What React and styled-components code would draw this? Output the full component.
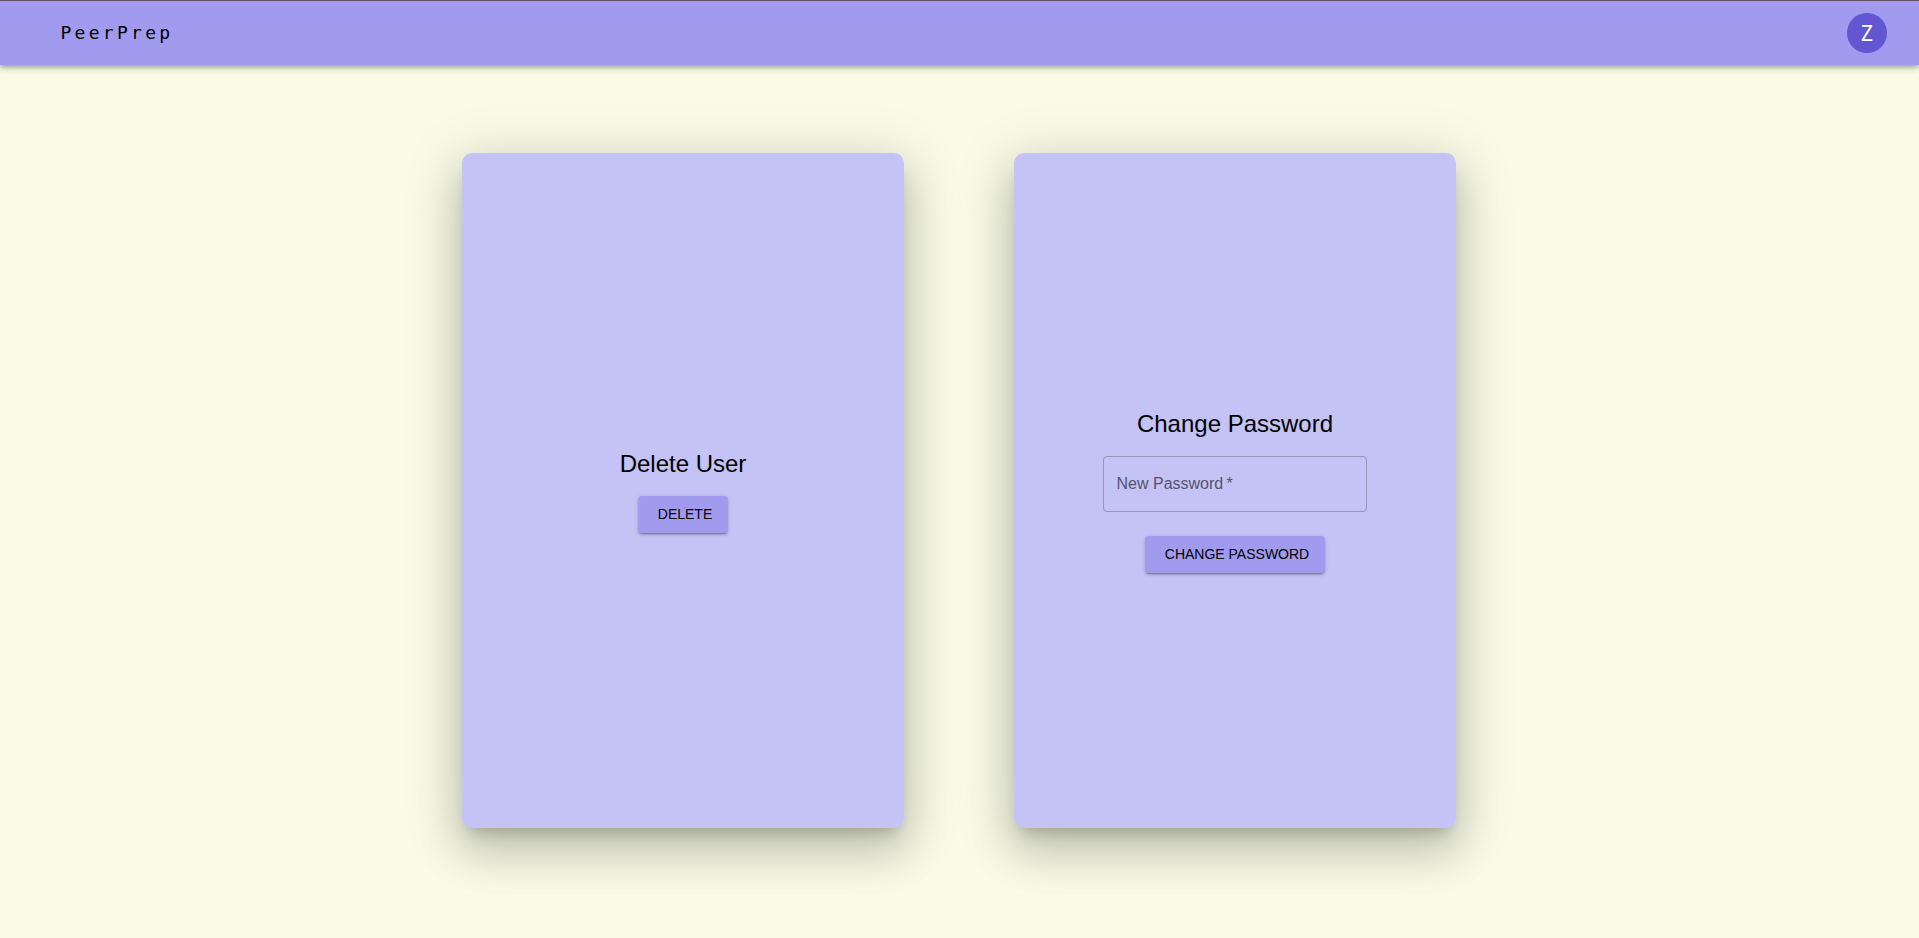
import React from 'react';
import styled, { createGlobalStyle } from 'styled-components';

const GlobalStyle = createGlobalStyle`
  *, *::before, *::after { box-sizing: border-box; }
  html, body { margin: 0; background: #f9fbe7; }
  body { font-family: "Liberation Sans", Arial, sans-serif; color: #000; overflow: hidden; }
`;

const Page = styled.div`
  display: flex;
  flex-direction: column;
  height: 100vh;
`;

const AppBar = styled.header`
  display: flex;
  align-items: center;
  justify-content: space-between;
  height: 65px;
  flex: none;
  padding: 0 32px 0 60.5px;
  border-top: 1px solid #6c4f60;
  background: #a19bf0;
  box-shadow: 0 2px 4px -1px rgba(0, 0, 0, 0.2), 0 4px 5px 0 rgba(0, 0, 0, 0.14),
    0 1px 10px 0 rgba(0, 0, 0, 0.12);
`;

const Brand = styled.a`
  font-family: "DejaVu Sans Mono", monospace;
  font-size: 18px;
  line-height: 28px;
  letter-spacing: 3.28px;
`;

const Avatar = styled.div`
  display: flex;
  align-items: center;
  justify-content: center;
  width: 40px;
  height: 40px;
  border-radius: 50%;
  background: #6256d2;
  color: #fff;
  font-family: "Noto Sans", sans-serif;
  font-size: 21px;
  line-height: 20px;
`;

const Main = styled.main`
  display: flex;
  justify-content: center;
  gap: 110px;
  padding: 88px 1px 0 0;
`;

const Card = styled.section`
  display: flex;
  flex-direction: column;
  align-items: center;
  justify-content: center;
  width: 442px;
  height: 675px;
  border-radius: 10px;
  background: #c5c2f6;
  box-shadow: 0 11px 15px -7px rgba(0, 0, 0, 0.2), 0 24px 44px 3px rgba(0, 0, 0, 0.14),
    0 9px 56px 8px rgba(0, 0, 0, 0.12);
`;

const Title = styled.h1`
  margin: 0 0 16px;
  font-size: 24px;
  font-weight: 400;
  line-height: 32px;
`;

const Field = styled.label`
  display: flex;
  align-items: center;
  width: 264px;
  height: 56px;
  margin-bottom: 24px;
  padding: 0 12.5px 2px;
  border: 1px solid #9794bd;
  border-radius: 4px;
  color: #55536a;
  font-size: 16px;
  line-height: 23px;
`;

const Button = styled.button`
  height: 37px;
  padding: 0 16px 2px 20px;
  border: 0;
  border-radius: 4px;
  background: #a19bf0;
  color: #000;
  font: 400 14px/24px "Liberation Sans", Arial, sans-serif;
  text-transform: uppercase;
  box-shadow: 0 3px 1px -2px rgba(0, 0, 0, 0.2), 0 2px 2px 0 rgba(0, 0, 0, 0.14),
    0 1px 5px 0 rgba(0, 0, 0, 0.12);
`;

export default function App() {
  return (
    <Page>
      <GlobalStyle />
      <AppBar>
        <Brand>PeerPrep</Brand>
        <Avatar>Z</Avatar>
      </AppBar>
      <Main>
        <Card>
          <Title>Delete User</Title>
          <Button>Delete</Button>
        </Card>
        <Card>
          <Title>Change Password</Title>
          <Field>New Password&thinsp;*</Field>
          <Button>Change Password</Button>
        </Card>
      </Main>
    </Page>
  );
}
